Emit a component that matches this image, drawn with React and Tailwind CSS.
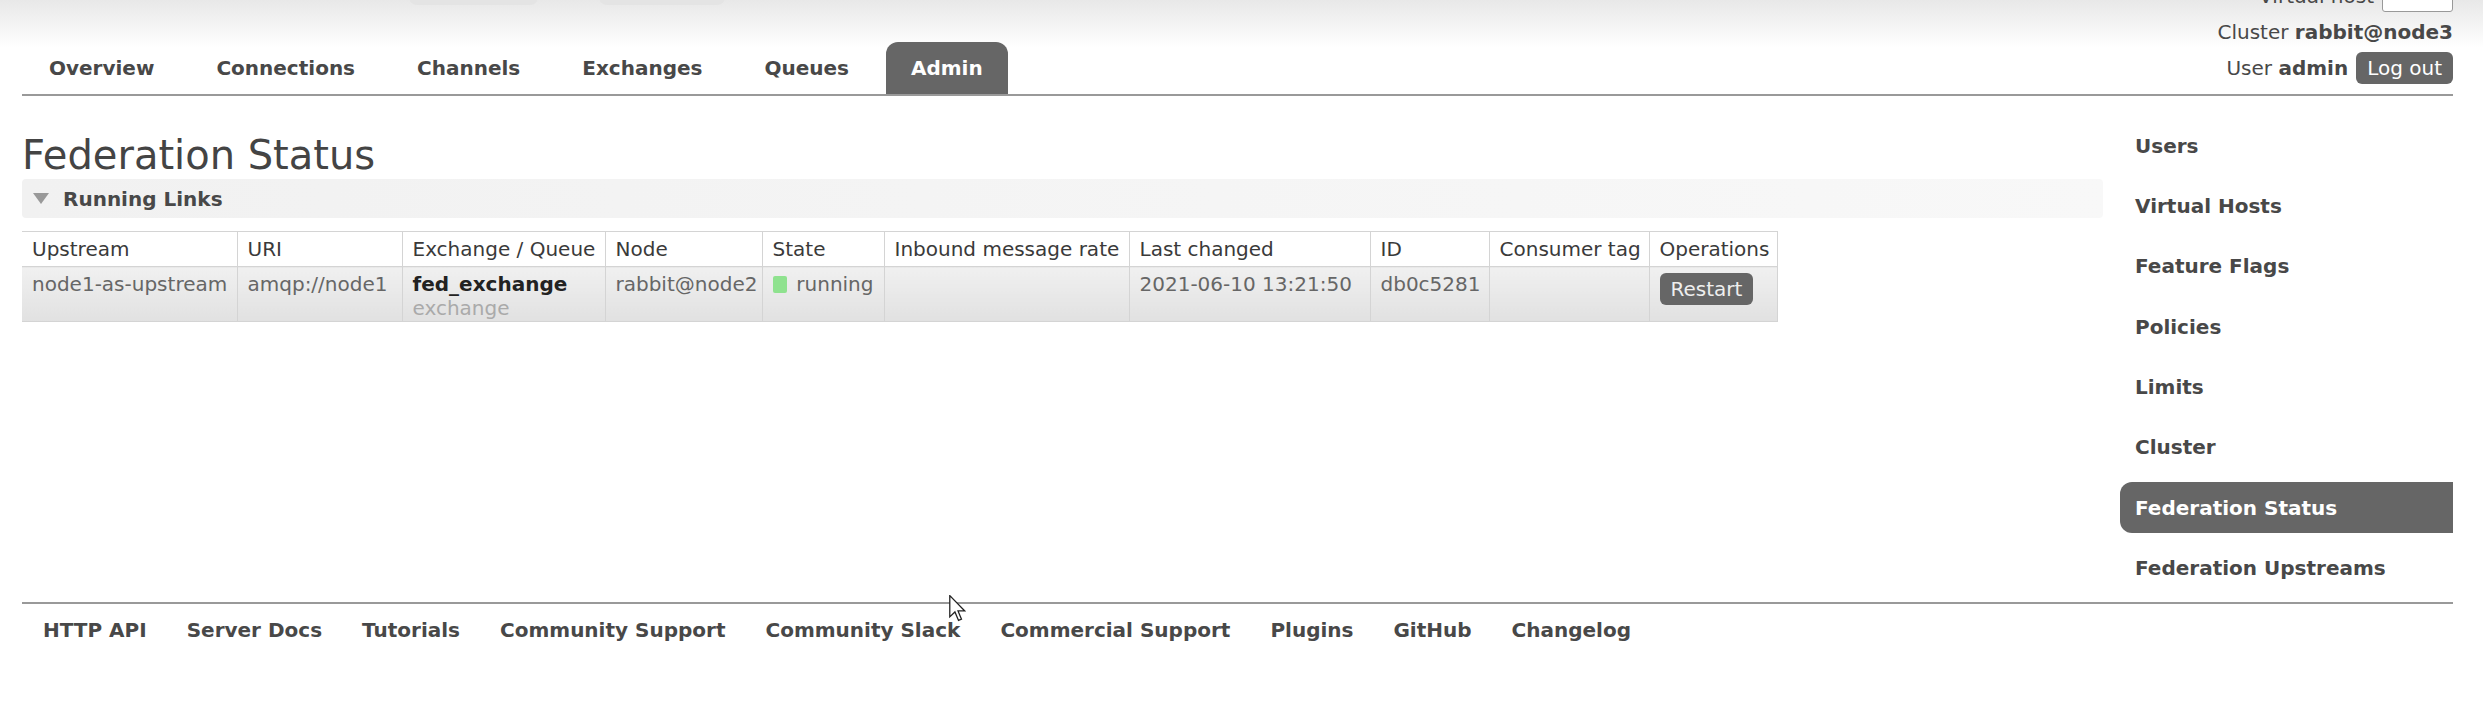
import React from 'react';

const tabs = ['Overview', 'Connections', 'Channels', 'Exchanges', 'Queues', 'Admin'];

const sideItems = [
  'Users',
  'Virtual Hosts',
  'Feature Flags',
  'Policies',
  'Limits',
  'Cluster',
  'Federation Status',
  'Federation Upstreams',
];

const footerLinks = [
  'HTTP API',
  'Server Docs',
  'Tutorials',
  'Community Support',
  'Community Slack',
  'Commercial Support',
  'Plugins',
  'GitHub',
  'Changelog',
];

const columns = [
  { name: 'Upstream', w: 'w-[215px]' },
  { name: 'URI', w: 'w-[165px]' },
  { name: 'Exchange / Queue', w: 'w-[203px]' },
  { name: 'Node', w: 'w-[157px]' },
  { name: 'State', w: 'w-[122px]' },
  { name: 'Inbound message rate', w: 'w-[245px]' },
  { name: 'Last changed', w: 'w-[241px]' },
  { name: 'ID', w: 'w-[119px]' },
  { name: 'Consumer tag', w: 'w-[160px]' },
  { name: 'Operations', w: 'w-[128px]' },
];

const td = 'h-[55px] align-top px-[10px] pt-[5px] whitespace-nowrap border-r border-b border-[#d4d4d4] bg-linear-to-b from-[#f0f0f0] to-[#e1e1e1] text-[#666]';

const App = () => {
  return (
    <div className="relative w-[2483px] h-[715px] overflow-hidden bg-white font-['DejaVu_Sans',sans-serif] text-[20px] leading-[24px] text-[#484848]">
      {/* header */}
      <div className="bg-linear-to-b from-[#e8e8e8] to-white to-50%">
        <div className="ml-[22px] mr-[30px] h-[96px] flex items-end justify-between border-b-2 border-[#999]">
          <div className="flex flex-col">
            <div className="h-[32px] flex ml-[387px] gap-[61px]">
              <div className="w-[129px] h-[32px] rounded-[8px] bg-[#e4e4e4]"></div>
              <div className="w-[126px] h-[32px] rounded-[8px] bg-[#e4e4e4]"></div>
            </div>
            <ul className="mt-[37px] pl-[2px] flex gap-[12px]">
              {tabs.map((t) => (
                <li
                  key={t}
                  className={`h-[52px] px-[25px] flex items-center font-bold rounded-t-[12px] ${
                    t === 'Admin' ? 'bg-[#666] text-white' : 'text-[#484848]'
                  }`}
                >
                  {t}
                </li>
              ))}
            </ul>
          </div>
          <div className="flex flex-col items-end pb-[8px]">
            <div className="h-[36px] flex items-center gap-[8px]">
              <span>Virtual host</span>
              <div className="w-[71px] h-[32px] border border-[#999] rounded-[3px] bg-white"></div>
            </div>
            <div className="h-[36px] flex items-center">
              <span>
                Cluster <b className="font-bold">rabbit@node3</b>
              </span>
            </div>
            <div className="h-[36px] flex items-center gap-[8px]">
              <span>
                User <b className="font-bold">admin</b>
              </span>
              <button className="h-[32px] px-[11px] rounded-[6px] bg-[#666] text-white">Log out</button>
            </div>
          </div>
        </div>
      </div>

      {/* body */}
      <div className="ml-[22px] mr-[30px] flex items-start">
        <div className="flex-1 min-w-0">
          <h1 className="mt-[35px] text-[40px] leading-[48px] font-normal text-[#444]">Federation Status</h1>
          <div className="h-[39px] flex items-center pl-[11px] gap-[14px] rounded-[4px] bg-linear-to-r from-[#f1f1f1] to-[#f8f8f8]">
            <svg width="16" height="11" viewBox="0 0 16 11">
              <polygon points="0,0 16,0 8,11" fill="#999" />
            </svg>
            <span className="text-[20px] font-bold text-[#484848]">Running Links</span>
          </div>
          <table className="mt-[13px] table-fixed border-collapse w-[1755px] text-left">
            <colgroup>
              {columns.map((c) => (
                <col key={c.name} className={c.w} />
              ))}
            </colgroup>
            <thead>
              <tr>
                {columns.map((c) => (
                  <th
                    key={c.name}
                    className="h-[35px] px-[10px] font-normal text-[#3a3a3a] bg-white border-t border-r border-b border-[#d4d4d4] whitespace-nowrap"
                  >
                    {c.name}
                  </th>
                ))}
              </tr>
            </thead>
            <tbody>
              <tr>
                <td className={td}>node1-as-upstream</td>
                <td className={td}>amqp://node1</td>
                <td className={td}>
                  <div className="font-bold text-[#222]">fed_exchange</div>
                  <div className="text-[#aaa]">exchange</div>
                </td>
                <td className={td}>rabbit@node2</td>
                <td className={td}>
                  <div className="flex items-center gap-[9px]">
                    <span className="w-[16px] h-[17px] rounded-[2px] bg-[#8fe28f]"></span>
                    <span>running</span>
                  </div>
                </td>
                <td className={td}></td>
                <td className={td}>2021-06-10 13:21:50</td>
                <td className={td}>db0c5281</td>
                <td className={td}></td>
                <td className={`${td} pt-[6px] px-[9px]`}>
                  <button className="h-[32px] px-[11px] rounded-[6px] bg-[#666] text-[#eee]">Restart</button>
                </td>
              </tr>
            </tbody>
          </table>
        </div>

        <ul className="w-[333px] ml-[17px] mt-[24px] flex flex-col gap-[9.4px]">
          {sideItems.map((s) => (
            <li
              key={s}
              className={`h-[51px] pl-[15px] flex items-center font-bold ${
                s === 'Federation Status' ? 'bg-[#666] text-white rounded-l-[12px]' : 'text-[#484848]'
              }`}
            >
              {s}
            </li>
          ))}
        </ul>
      </div>

      {/* footer */}
      <div className="mt-[8px] ml-[22px] mr-[30px] border-t-2 border-[#999] pt-[14px] pl-[1px] flex">
        {footerLinks.map((l) => (
          <span key={l} className="px-[20px] font-bold text-[#484848]">
            {l}
          </span>
        ))}
      </div>

      {/* mouse pointer */}
      <svg className="absolute left-[949px] top-[595px]" width="17" height="27" viewBox="0 0 13 21">
        <path d="M0.5 0.5 L0.5 17 L4.5 13.2 L7.3 19.8 L9.6 18.8 L6.9 12.4 L12.2 12.4 Z" fill="white" stroke="#222" strokeWidth="1" />
      </svg>
    </div>
  );
};

export default App;
